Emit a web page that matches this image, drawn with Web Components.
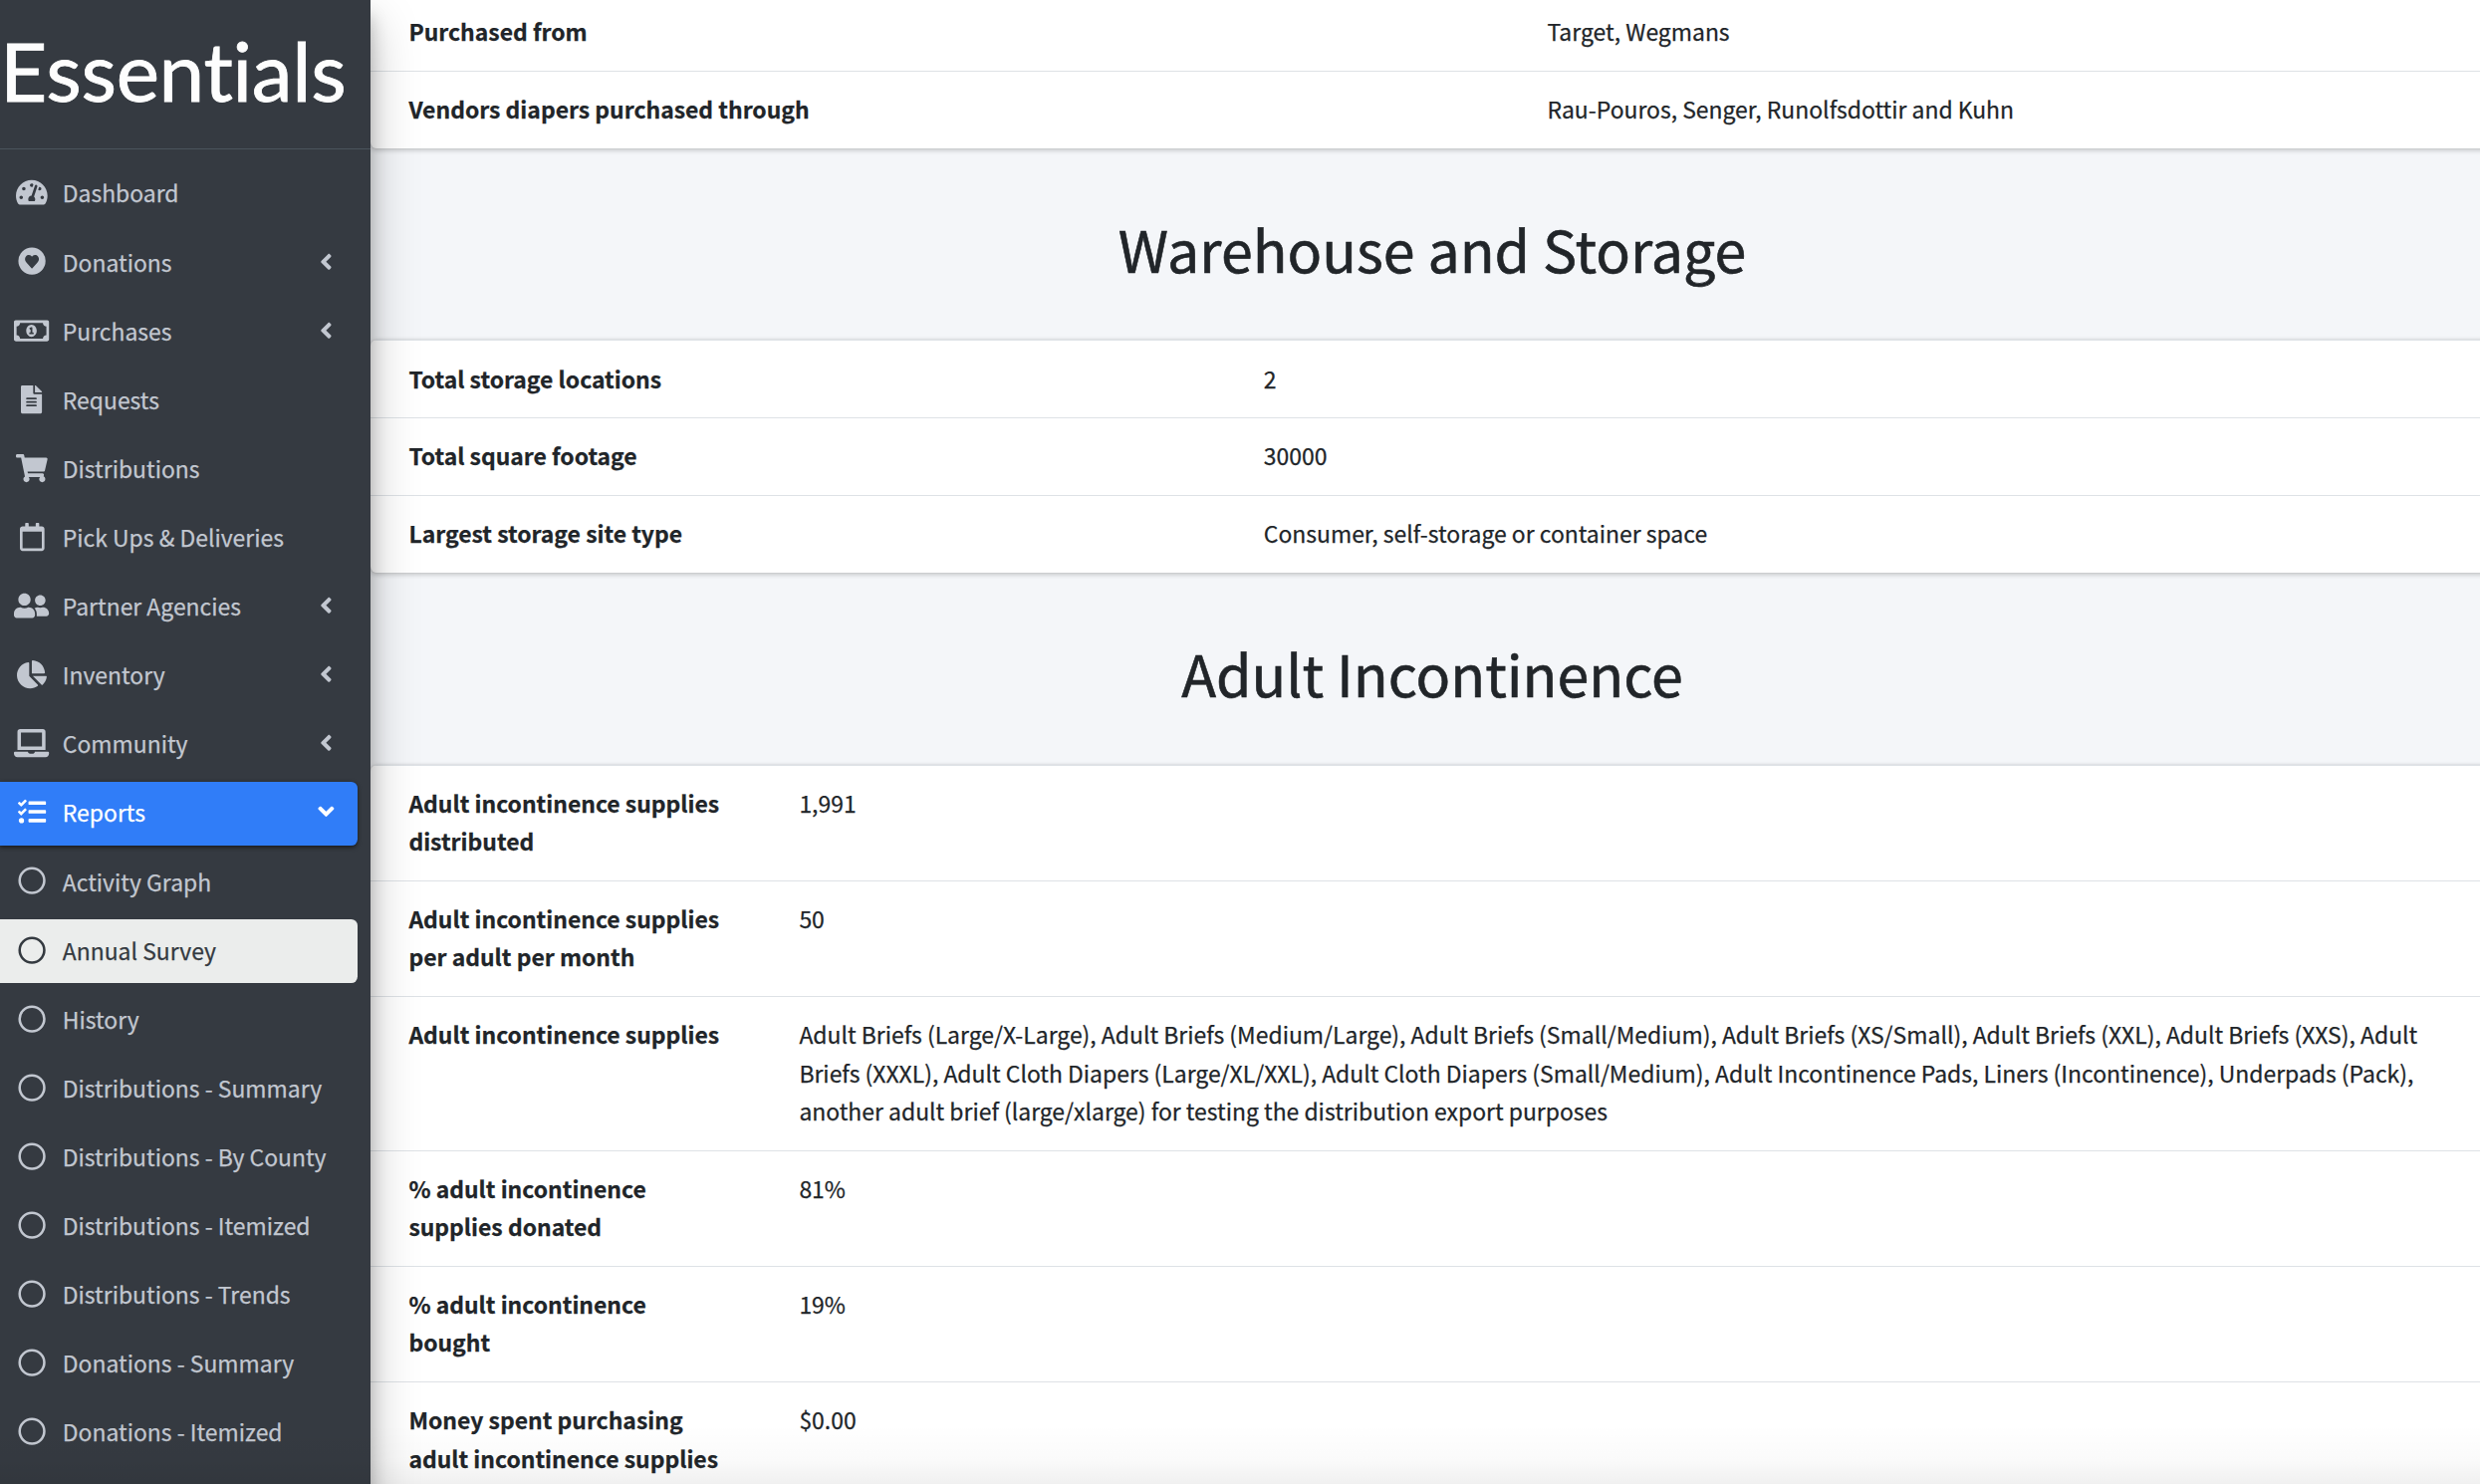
<!DOCTYPE html>
<html lang="en">
<head>
<meta charset="utf-8">
<title>Annual Survey</title>
<style>
  html, body { margin: 0; height: 100%; overflow: hidden; }
  body {
    background: #f4f6f9;
    color: #212529;
    font-family: "Noto Sans CJK SC", "Noto Sans", sans-serif;
    font-size: 22.93px;
    line-height: 38.4px;
    -webkit-text-stroke: .25px currentColor;
  }
</style>
</head>
<body>
<app-shell>
  <side-bar slot="sidebar">
    <nav-link icon="gauge">Dashboard</nav-link>
    <nav-link icon="heart" menu>Donations</nav-link>
    <nav-link icon="money" menu>Purchases</nav-link>
    <nav-link icon="file">Requests</nav-link>
    <nav-link icon="cart">Distributions</nav-link>
    <nav-link icon="calendar">Pick Ups &amp; Deliveries</nav-link>
    <nav-link icon="users" menu>Partner Agencies</nav-link>
    <nav-link icon="pie" menu>Inventory</nav-link>
    <nav-link icon="laptop" menu>Community</nav-link>
    <nav-link icon="tasks" menu open>Reports</nav-link>
    <nav-link icon="circle">Activity Graph</nav-link>
    <nav-link icon="circle" current>Annual Survey</nav-link>
    <nav-link icon="circle">History</nav-link>
    <nav-link icon="circle">Distributions - Summary</nav-link>
    <nav-link icon="circle">Distributions - By County</nav-link>
    <nav-link icon="circle">Distributions - Itemized</nav-link>
    <nav-link icon="circle">Distributions - Trends</nav-link>
    <nav-link icon="circle">Donations - Summary</nav-link>
    <nav-link icon="circle">Donations - Itemized</nav-link>
  </side-bar>

  <report-card class="first" style="--label-width:1181.5px">
    <report-row label="Purchased from">Target, Wegmans</report-row>
    <report-row label="Vendors diapers purchased through">Rau-Pouros, Senger, Runolfsdottir and Kuhn</report-row>
  </report-card>

  <section-title style="height:192.7px">Warehouse and Storage</section-title>
  <report-card style="--label-width:896.8px;--shift:.3px">
    <report-row style="--shift:.9px" label="Total storage locations">2</report-row>
    <report-row label="Total square footage">30000</report-row>
    <report-row label="Largest storage site type">Consumer, self-storage or container space</report-row>
  </report-card>

  <section-title style="height:193.3px">Adult Incontinence</section-title>
  <report-card style="--label-width:430.4px">
    <report-row label="Adult incontinence supplies distributed">1,991</report-row>
    <report-row label="Adult incontinence supplies per adult per month">50</report-row>
    <report-row label="Adult incontinence supplies">Adult Briefs (Large/X-Large), Adult Briefs (Medium/Large), Adult Briefs (Small/Medium), Adult Briefs (XS/Small), Adult Briefs (XXL), Adult Briefs (XXS), Adult Briefs (XXXL), Adult Cloth Diapers (Large/XL/XXL), Adult Cloth Diapers (Small/Medium), Adult Incontinence Pads, Liners (Incontinence), Underpads (Pack), another adult brief (large/xlarge) for testing the distribution export purposes</report-row>
    <report-row label="% adult incontinence supplies donated">81%</report-row>
    <report-row label="% adult incontinence bought">19%</report-row>
    <report-row label="Money spent purchasing adult incontinence supplies">$0.00</report-row>
  </report-card>
</app-shell>

<script>
  const ICONS = {
    gauge: [576, '<path d="M288 32C128.94 32 0 160.94 0 320c0 52.8 14.25 102.26 39.06 144.8 5.61 9.62 16.3 15.2 27.44 15.2h443c11.14 0 21.83-5.58 27.44-15.2C561.75 422.26 576 372.8 576 320c0-159.06-128.94-288-288-288zm0 64c14.71 0 26.58 10.13 30.32 23.65-1.11 2.26-2.64 4.23-3.45 6.67l-9.22 27.67c-5.13 3.49-10.97 6.01-17.64 6.01-17.67 0-32-14.33-32-32S270.33 96 288 96zM96 384c-17.67 0-32-14.33-32-32s14.33-32 32-32 32 14.33 32 32-14.33 32-32 32zm48-160c-17.67 0-32-14.33-32-32s14.33-32 32-32 32 14.33 32 32-14.33 32-32 32zm246.77-72.41l-61.33 184C343.13 347.33 352 364.54 352 384c0 11.72-3.38 22.55-8.88 32H232.88c-5.5-9.45-8.88-20.28-8.88-32 0-33.94 26.5-61.43 59.9-63.59l61.34-184.01c4.17-12.56 17.73-19.45 30.36-15.17 12.57 4.19 19.35 17.79 15.17 30.36zm14.66 57.2l15.52-46.55c3.47-1.29 7.13-2.23 11.05-2.23 17.67 0 32 14.33 32 32s-14.33 32-32 32c-11.38-.01-20.89-6.28-26.57-15.22zM480 384c-17.67 0-32-14.33-32-32s14.33-32 32-32 32 14.33 32 32-14.33 32-32 32z"/>'],
    heart: [512, '<path fill-rule="evenodd" d="M256 8a248 248 0 1 0 0 496a248 248 0 1 0 0-496zM265 385l89-98c34-36 38-83 12-116c-28-35-76-31-99-7l-11 12-11-12c-23-24-71-28-99 7c-26 33-22 80 12 116l89 98c5 6 13 6 18 0z"/>'],
    money: [640, '<path d="M320 144c-53.02 0-96 50.14-96 112 0 61.85 42.98 112 96 112 53 0 96-50.13 96-112 0-61.86-42.98-112-96-112zm40 168c0 4.42-3.58 8-8 8h-64c-4.42 0-8-3.58-8-8v-16c0-4.42 3.58-8 8-8h16v-55.44l-.47.31a7.992 7.992 0 0 1-11.09-2.22l-8.88-13.31a7.992 7.992 0 0 1 2.22-11.09l15.33-10.22a23.99 23.99 0 0 1 13.31-4.03H328c4.42 0 8 3.58 8 8v88h16c4.42 0 8 3.58 8 8v16zM608 64H32C14.33 64 0 78.33 0 96v320c0 17.67 14.33 32 32 32h576c17.67 0 32-14.33 32-32V96c0-17.67-14.33-32-32-32zm-16 272c-35.35 0-64 28.65-64 64H112c0-35.35-28.65-64-64-64V176c35.35 0 64-28.65 64-64h416c0 35.35 28.65 64 64 64v160z"/>'],
    file: [384, '<path d="M224 136V0H24C10.7 0 0 10.7 0 24v464c0 13.3 10.7 24 24 24h336c13.3 0 24-10.7 24-24V160H248c-13.2 0-24-10.8-24-24zm64 236c0 6.6-5.4 12-12 12H108c-6.6 0-12-5.4-12-12v-8c0-6.6 5.4-12 12-12h168c6.6 0 12 5.4 12 12v8zm0-64c0 6.6-5.4 12-12 12H108c-6.6 0-12-5.4-12-12v-8c0-6.6 5.4-12 12-12h168c6.6 0 12 5.4 12 12v8zm0-72v8c0 6.6-5.4 12-12 12H108c-6.6 0-12-5.4-12-12v-8c0-6.6 5.4-12 12-12h168c6.6 0 12 5.4 12 12zm96-114.1v6.1H256V0h6.1c6.4 0 12.5 2.5 17 7l97.9 98c4.5 4.5 7 10.6 7 16.9z"/>'],
    cart: [576, '<path d="M528.12 301.319l47.273-208C578.806 78.301 567.391 64 551.99 64H159.208l-9.166-44.81C147.758 8.021 137.93 0 126.529 0H24C10.745 0 0 10.745 0 24v16c0 13.255 10.745 24 24 24h69.883l70.248 343.435C147.325 417.1 136 435.222 136 456c0 30.928 25.072 56 56 56s56-25.072 56-56c0-15.674-6.447-29.835-16.824-40h209.647C430.447 426.165 424 440.326 424 456c0 30.928 25.072 56 56 56s56-25.072 56-56c0-22.172-12.888-41.332-31.579-50.405l5.517-24.276c3.413-15.018-8.002-29.319-23.403-29.319H218.117l-6.545-32h293.145c11.206 0 20.92-7.754 23.403-18.681z"/>'],
    calendar: [448, '<path d="M400 64h-48V12c0-6.6-5.4-12-12-12h-40c-6.6 0-12 5.4-12 12v52H160V12c0-6.6-5.4-12-12-12h-40c-6.6 0-12 5.4-12 12v52H48C21.5 64 0 85.5 0 112v352c0 26.5 21.5 48 48 48h352c26.5 0 48-21.5 48-48V112c0-26.5-21.5-48-48-48zm-6 400H54c-3.3 0-6-2.7-6-6V160h352v298c0 3.3-2.7 6-6 6z"/>'],
    users: [640, '<path d="M192 256c61.9 0 112-50.1 112-112S253.9 32 192 32 80 82.1 80 144s50.1 112 112 112zm76.8 32h-8.3c-20.8 10-43.9 16-68.5 16s-47.6-6-68.5-16h-8.3C51.6 288 0 339.6 0 403.2V432c0 26.5 21.5 48 48 48h288c26.5 0 48-21.5 48-48v-28.8c0-63.6-51.6-115.2-115.2-115.2zM480 256c53 0 96-43 96-96s-43-96-96-96-96 43-96 96 43 96 96 96zm48 32h-3.8c-13.9 4.8-28.6 8-44.2 8s-30.3-3.2-44.2-8H432c-20.4 0-39.2 5.9-55.7 15.4 24.4 26.3 39.7 61.2 39.7 99.8v38.4c0 2.2-.5 4.3-.6 6.4H592c26.5 0 48-21.5 48-48 0-61.9-50.1-112-112-112z"/>'],
    pie: [544, '<path d="M527.79 288H290.5l158.03 158.03c6.04 6.04 15.98 6.53 22.19.68 38.7-36.46 65.32-85.61 73.13-140.86 1.34-9.46-6.51-17.85-16.06-17.85zm-15.83-64.8C503.72 103.74 408.26 8.28 288.8.04 279.68-.59 272 7.1 272 16.24V240h223.77c9.14 0 16.82-7.68 16.19-16.8zM224 288V50.71c0-9.55-8.39-17.4-17.84-16.06C86.99 51.49-4.1 155.6.14 280.37 4.5 408.51 114.83 513.59 243.03 511.98c50.4-.63 96.97-16.87 135.26-44.03 7.9-5.6 8.42-17.23 1.57-24.08L224 288z"/>'],
    laptop: [640, '<path d="M624 416H381.54c-.74 19.81-14.71 32-32.74 32H288c-18.69 0-33.02-17.47-32.77-32H16c-8.8 0-16 7.2-16 16v16c0 35.2 28.8 64 64 64h512c35.2 0 64-28.8 64-64v-16c0-8.8-7.2-16-16-16zM576 48c0-26.4-21.6-48-48-48H112C85.6 0 64 21.6 64 48v336h512V48zm-64 272H128V64h384v256z"/>'],
    tasks: [512, '<path d="M139.61 35.5a12 12 0 0 0-17 0L58.93 98.81l-22.7-22.12a12 12 0 0 0-17 0L3.53 92.41a12 12 0 0 0 0 17l47.59 47.4a12.78 12.78 0 0 0 17.61 0l15.59-15.62L156.52 69a12.09 12.09 0 0 0 .09-17zm0 159.19a12 12 0 0 0-17 0l-63.68 63.72-22.7-22.1a12 12 0 0 0-17 0L3.53 252a12 12 0 0 0 0 17L51 316.5a12.77 12.77 0 0 0 17.6 0l15.7-15.69 72.2-72.22a12 12 0 0 0 .09-16.9zM64 368c-26.49 0-48.59 21.5-48.59 48S37.53 464 64 464a48 48 0 0 0 0-96zm432 16H208a16 16 0 0 0-16 16v32a16 16 0 0 0 16 16h288a16 16 0 0 0 16-16v-32a16 16 0 0 0-16-16zm0-320H208a16 16 0 0 0-16 16v32a16 16 0 0 0 16 16h288a16 16 0 0 0 16-16V80a16 16 0 0 0-16-16zm0 160H208a16 16 0 0 0-16 16v32a16 16 0 0 0 16 16h288a16 16 0 0 0 16-16v-32a16 16 0 0 0-16-16z"/>'],
    circle: [512, '<circle cx="256" cy="256" r="225" fill="none" stroke="currentColor" stroke-width="46"/>'],
    angle: [256, '<path d="M31.7 239l136-136c9.4-9.4 24.6-9.4 33.9 0l22.6 22.6c9.4 9.4 9.4 24.6 0 33.9L127.9 256l96.4 96.4c9.4 9.4 9.4 24.6 0 33.9L201.7 409c-9.4 9.4-24.6 9.4-33.9 0l-136-136c-9.5-9.4-9.5-24.6-.1-34z"/>']
  };

  function icon(name, size) {
    const [w, body] = ICONS[name];
    return `<svg viewBox="0 0 ${w} 512" width="${(w * size / 512).toFixed(2)}" height="${size}" fill="currentColor" aria-hidden="true">${body}</svg>`;
  }

  class Base extends HTMLElement {
    connectedCallback() {
      if (this.shadowRoot) return;
      this.attachShadow({ mode: 'open' }).innerHTML = this.render();
    }
  }

  customElements.define('app-shell', class extends Base {
    render() {
      return `<style>
        :host { display: flex; height: 1490px; overflow: hidden; position: relative; }
        ::slotted(side-bar) { flex: none; position: relative; z-index: 2; }
        main { flex: none; width: 2132px; height: 1490px; overflow: hidden; }
        .fade { position: absolute; inset: auto 0 0 0; height: 60px; z-index: 3; pointer-events: none;
                background: linear-gradient(to bottom, rgba(0,0,0,0), rgba(0,0,0,.02) 60%, rgba(0,0,0,.06)); }
      </style>
      <slot name="sidebar"></slot><main><slot></slot></main><div class="fade"></div>`;
    }
  });

  customElements.define('brand-mark', class extends Base {
    render() {
      return `<style>
        :host { display: block; height: 149px; white-space: nowrap; color: #fdfdfd;
                font: 400 82px/140px Lato, "Noto Sans", sans-serif; font-variant-ligatures: none;
                letter-spacing: -.35px; -webkit-text-stroke: .8px #fdfdfd; }
      </style>Essentials`;
    }
  });

  customElements.define('side-bar', class extends Base {
    render() {
      return `<style>
        :host { display: flex; flex-direction: column; box-sizing: border-box; width: 372px; height: 1600px;
                background: #353a41; color: #c2c7d0;
                box-shadow: 0 22.4px 44.8px rgba(0,0,0,.25), 0 16px 16px rgba(0,0,0,.22); }
        header { flex: none; height: 149px; border-bottom: 1px solid #4b545c; }
        nav { display: flex; flex-direction: column; gap: 5.12px; padding: 12.8px 13px 0 0; }
      </style>
      <header><brand-mark></brand-mark></header>
      <nav><slot></slot></nav>`;
    }
  });

  customElements.define('nav-link', class extends Base {
    render() {
      return `<style>
        :host { display: flex; box-sizing: border-box; height: 64px; padding: 11.7px 0 0 12.5px;
                border-radius: 0 6.4px 6.4px 0; white-space: nowrap; }
        :host([open]) { background: #307df8; color: #fff;
                box-shadow: 0 1.6px 4.8px rgba(0,0,0,.24), 0 1.6px 3.2px rgba(0,0,0,.3); }
        :host([current]) { background: #ebedec; color: #343a40; }
        .icon { display: flex; justify-content: center; align-items: center; width: 39px; height: 37.8px; margin-right: 11.3px; }
        .label { flex: 1; }
        .arrow { display: flex; justify-content: center; align-items: center; width: 26px; height: 37.6px; margin-right: 18.8px; }
        :host([open]) .arrow svg { transform: rotate(-90deg); }
        svg { flex: none; overflow: visible; }
      </style>
      <span class="icon">${icon(this.getAttribute('icon'), 28.16)}</span>
      <span class="label"><slot></slot></span>
      ${this.hasAttribute('menu') ? `<span class="arrow">${icon('angle', 25.6)}</span>` : ''}`;
    }
  });

  customElements.define('section-title', class extends Base {
    render() {
      return `<style>
        :host { display: block; box-sizing: border-box; height: 193px; padding-top: 63.3px; text-align: center; }
        h1 { margin: 0; font-size: 57.3px; line-height: 76.8px; font-weight: 400; -webkit-text-stroke-width: .6px; }
      </style><h1><slot></slot></h1>`;
    }
  });

  customElements.define('report-card', class extends Base {
    render() {
      return `<style>
        :host { display: flex; flex-direction: column; background: #fff; border-radius: 6.4px; overflow: hidden;
                box-shadow: 0 0 1.6px rgba(0,0,0,.125), 0 1.6px 4.8px rgba(0,0,0,.2); }
        :host(.first) { margin-top: -7px; }
      </style><slot></slot>`;
    }
  });

  customElements.define('report-row', class extends Base {
    render() {
      return `<style>
        :host { display: grid; grid-template-columns: var(--label-width) 1fr; border-top: 1px solid #dee2e6; }
        div { padding: calc(17.8px + var(--shift, 0px)) 38.4px calc(20.6px - var(--shift, 0px)) 0; }
        .label { padding-left: 38.4px; padding-right: 72px; font-weight: 700; }
      </style>
      <div class="label">${this.getAttribute('label')}</div>
      <div class="value"><slot></slot></div>`;
    }
  });
</script>
</body>
</html>
